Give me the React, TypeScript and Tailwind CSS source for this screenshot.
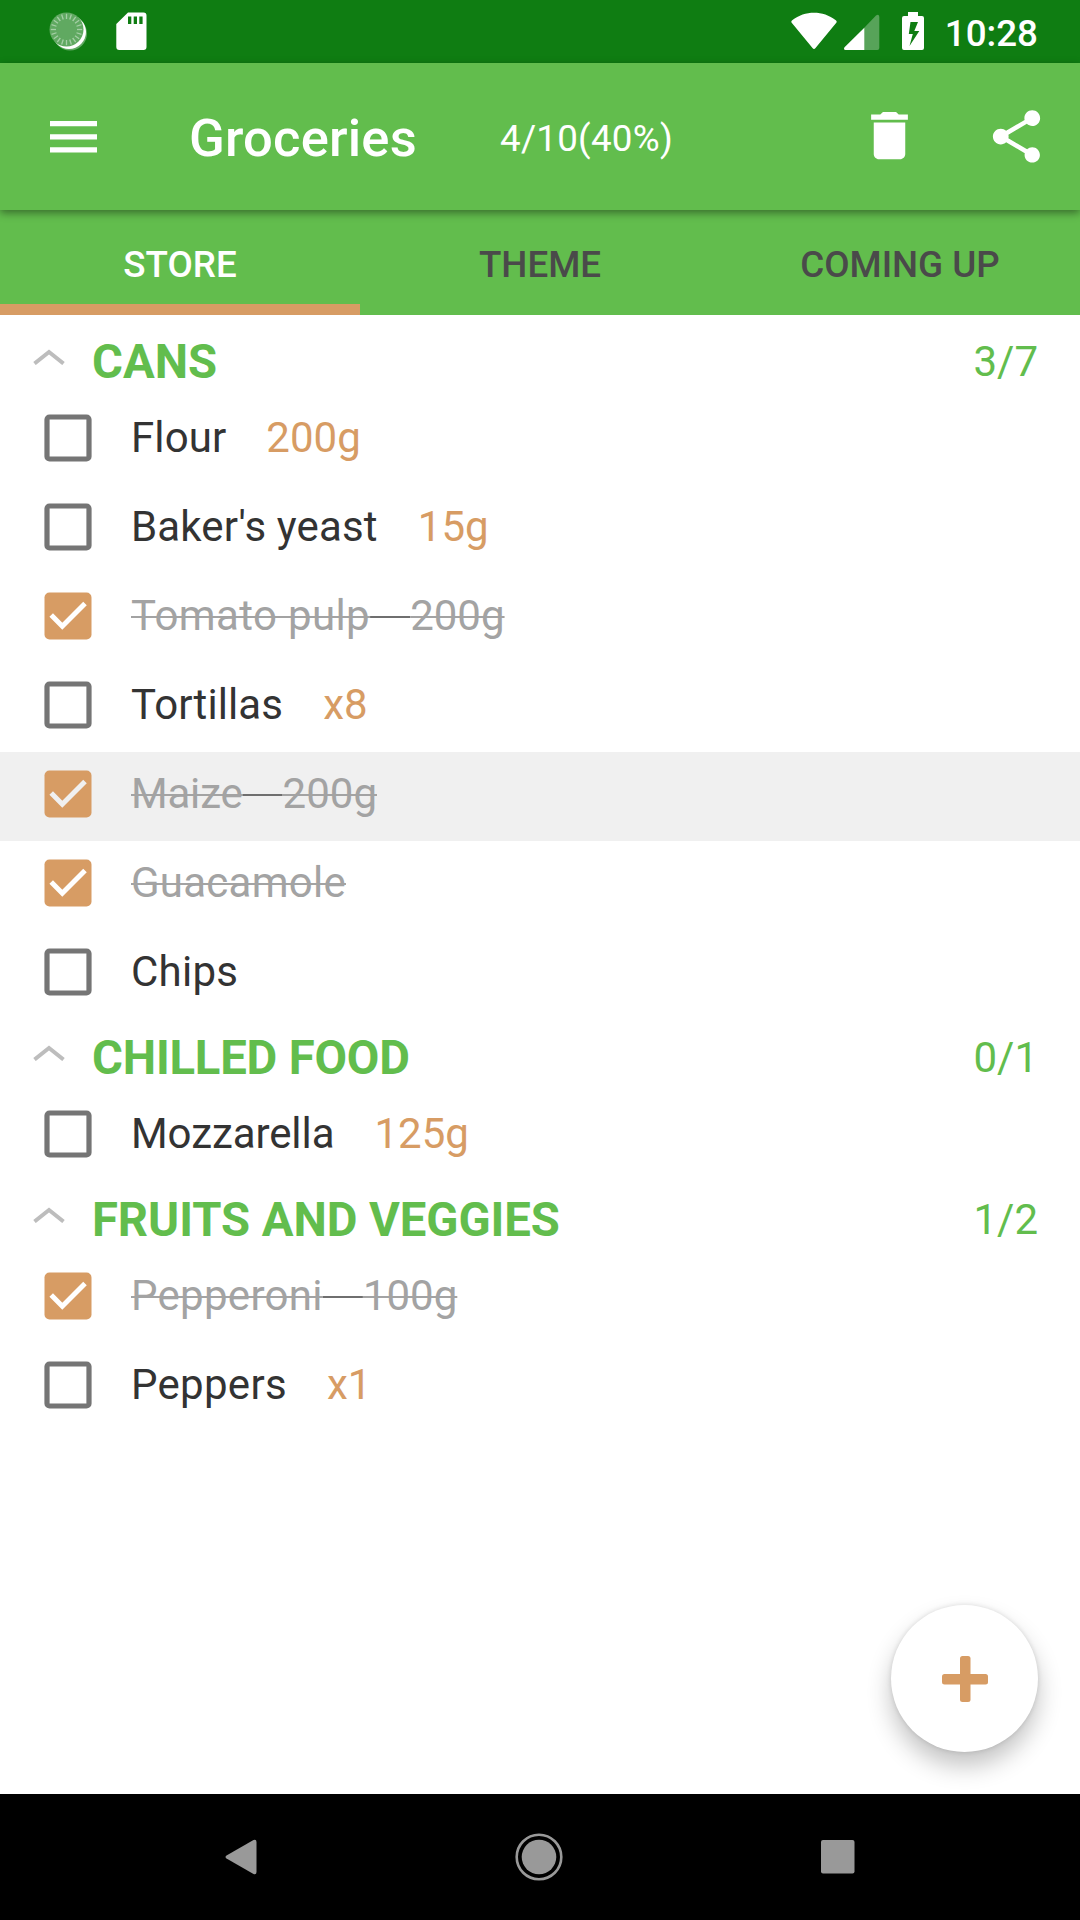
import React from "react";

type Item = { name: string; qty?: string; done?: boolean; active?: boolean; tracking: string };
type Section = { title: string; count: string; tracking: string; items: Item[] };

const sections: Section[] = [
  {
    title: "CANS",
    count: "3/7",
    tracking: "tracking-normal",
    items: [
      { name: "Flour", qty: "200g", tracking: "tracking-[0.1px]" },
      { name: "Baker's yeast", qty: "15g", tracking: "tracking-[0.16px]" },
      { name: "Tomato pulp", qty: "200g", done: true, tracking: "tracking-[0.38px]" },
      { name: "Tortillas", qty: "x8", tracking: "tracking-[0.1px]" },
      { name: "Maize", qty: "200g", done: true, active: true, tracking: "tracking-[-0.2px]" },
      { name: "Guacamole", done: true, tracking: "tracking-[0.25px]" },
      { name: "Chips", tracking: "tracking-[0.25px]" },
    ],
  },
  {
    title: "CHILLED FOOD",
    count: "0/1",
    tracking: "tracking-[-0.2px]",
    items: [{ name: "Mozzarella", qty: "125g", tracking: "tracking-[-0.08px]" }],
  },
  {
    title: "FRUITS AND VEGGIES",
    count: "1/2",
    tracking: "tracking-[-0.07px]",
    items: [
      { name: "Pepperoni", qty: "100g", done: true, tracking: "tracking-[0.3px]" },
      { name: "Peppers", qty: "x1", tracking: "tracking-[0.3px]" },
    ],
  },
];

const ticks = Array.from({ length: 20 }, (_, i) => i * 18);

function StatusBar() {
  return (
    <div className="flex h-[63px] shrink-0 items-start bg-[#0f7d12] text-white">
      <svg className="ml-[48px] mt-[10px] h-[42px] w-[42px]" viewBox="0 0 42 42">
        <circle cx="22" cy="23.5" r="17" fill="#fff" opacity="0.35" />
        <circle cx="21" cy="22" r="17" fill="#fff" />
        <circle cx="18.5" cy="19.5" r="17" fill="#60a961" />
        {ticks.map((a) => (
          <line key={a} x1="18.5" y1="3.8" x2="18.5" y2="9" stroke="#a5cfa6" strokeWidth="1.3" transform={`rotate(${a} 18.5 19.5)`} />
        ))}
      </svg>
      <svg className="ml-[26px] mt-[12px] h-[39px] w-[31px]" viewBox="0 0 31 39">
        <path d="M12 0.5H27.5a3 3 0 0 1 3 3V35a3 3 0 0 1-3 3H3.3a3 3 0 0 1-3-3V12Z" fill="#fff" />
        <path d="M12 4.5h3.3v7.5H12zM17.7 4.5H21v7.5h-3.300zM23.300 4.500h3.300v7.500h-3.300z" fill="#0f7d12" />
      </svg>
      <div className="flex-1" />
      <svg className="mt-[12px] h-[38px] w-[46px]" viewBox="0 0 46 38">
        <path d="M0.700 10.700Q-0.300 9.300 1.200 8.200C14-1.700 32-1.700 44.800 8.200Q46.300 9.300 45.300 10.700L24.500 36Q23 37.800 21.500 36Z" fill="#fff" />
      </svg>
      <svg className="ml-[7px] mt-[14px] h-[37px] w-[36px]" viewBox="0 0 36 37">
        <path d="M20 14L32 1.500Q33 .7 34 .7Q35.300 1 35.300 3V34Q35.300 36 33.300 36H20Z" fill="#57a359" />
        <path d="M20.300 13.700V36H1.500Q0 36 0 34.500Q0 33.700 .8 33Z" fill="#fff" />
      </svg>
      <svg className="ml-[22px] mt-[12px] h-[38px] w-[22px]" viewBox="0 0 22 38">
        <path fillRule="evenodd" d="M6 0H16V4H20Q22 4 22 6V36Q22 38 20 38H2Q0 38 0 36V6Q0 4 2 4H6ZM8.500 10L6.800 22H10.800L7.500 34L17.300 19H12.300L16 10Z" fill="#fff" />
      </svg>
      <span className="ml-[21px] mr-[42px] mt-[12px] text-[36.750px] font-medium leading-[43px]">10:28</span>
    </div>
  );
}

function AppBar() {
  return (
    <header className="relative z-10 flex h-[147px] shrink-0 items-center bg-[#62bd4d] text-white shadow-[0_3px_8px_rgba(0,0,0,0.42)]">
      <svg className="ml-[50px] h-[32px] w-[47px]" viewBox="0 0 47 32">
        <path d="M0 0h47v5.300H0zM0 13.300h47v5.300H0zM0 26.300h47v5.300H0z" fill="#fff" />
      </svg>
      <h1 className="ml-[92px] w-[229px] whitespace-nowrap pt-[3px] text-[52.500px] font-medium leading-[62px] tracking-[0.200px]">Groceries</h1>
      <span className="ml-[82px] pt-[4px] text-[36.750px] leading-[43px] tracking-[0.250px]">4/10(40%)</span>
      <div className="flex-1" />
      <svg className="mb-[2px] mr-[64px] h-[63px] w-[63px]" viewBox="0 0 24 24" fill="#fff">
        <path d="M6 19c0 1.100.9 2 2 2h8c1.100 0 2-.9 2-2V7H6v12zM19 4h-3.500l-1-1h-5l-1 1H5v2h14V4z" />
      </svg>
      <svg className="mb-[1px] mr-[32px] h-[63px] w-[63px]" viewBox="0 0 24 24" fill="#fff">
        <path d="M18 16.080c-.76 0-1.440.3-1.960.77L8.910 12.700c.05-.23.09-.46.09-.7s-.04-.47-.09-.7l7.050-4.110c.54.5 1.250.81 2.040.81 1.660 0 3-1.340 3-3s-1.340-3-3-3-3 1.340-3 3c0 .24.040.47.090.7L8.040 9.810C7.500 9.310 6.790 9 6 9c-1.660 0-3 1.340-3 3s1.340 3 3 3c.79 0 1.500-.31 2.040-.81l7.120 4.160c-.05.21-.08.43-.08.65 0 1.610 1.310 2.920 2.920 2.920 1.610 0 2.920-1.310 2.920-2.920s-1.310-2.920-2.920-2.920z" />
      </svg>
    </header>
  );
}

function Tabs() {
  return (
    <nav className="grid h-[105px] shrink-0 grid-cols-3 bg-[#62bd4d] text-center text-[36.750px] font-medium leading-[43px] text-[#4a4a4a]">
      <span className="border-b-[11px] border-[#d79c64] pt-[33px] text-white">STORE</span>
      <span className="pt-[33px]">THEME</span>
      <span className="pt-[33px]">COMING UP</span>
    </nav>
  );
}

function Checkbox({ done }: { done?: boolean }) {
  return (
    <svg className="h-[48px] w-[48px]" viewBox="0 0 48 48">
      {done ? (
        <>
          <rect x="0.500" y="0.500" width="47" height="47" rx="5" fill="#d79c64" />
          <path d="M7.200 23L18.300 34.300L41 11.500" fill="none" stroke="currentColor" strokeWidth="5" />
        </>
      ) : (
        <rect x="3" y="3" width="42" height="42" rx="2.500" fill="none" stroke="#757575" strokeWidth="5.200" />
      )}
    </svg>
  );
}

function Label({ item }: { item: Item }) {
  const strike = item.done ? "line-through decoration-2 " : "";
  return (
    <span className="ml-[39px] whitespace-pre pb-[2px] text-[42px] leading-[49px]">
      <span className={strike + item.tracking + (item.done ? " text-[#a3a3a3]" : " text-[#333]")}>{item.name}</span>
      {item.qty && <span className={strike + "tracking-[-0.400px] text-[#6f6f6f]"}>{"    "}</span>}
      {item.qty && <span className={strike + (item.done ? "text-[#a3a3a3]" : "text-[#d79c64]")}>{item.qty}</span>}
    </span>
  );
}

function Row({ item }: { item: Item }) {
  return (
    <li className={item.active ? "flex h-[89px] items-center bg-[#f0f0f0] pb-[5px] pl-[44px] text-[#f0f0f0]" : "flex h-[89px] items-center pb-[5px] pl-[44px] text-white"}>
      <Checkbox done={item.done} />
      <Label item={item} />
    </li>
  );
}

export default function App() {
  return (
    <div className="flex h-[1920px] w-[1080px] flex-col overflow-hidden bg-white font-[Roboto,sans-serif]">
      <StatusBar />
      <AppBar />
      <Tabs />
      <main className="relative flex-1 pt-[8px]">
        {sections.map((s) => (
          <section key={s.title}>
            <div className="flex h-[73px] items-center pl-[33px] pr-[42px] text-[#62bd4d]">
              <svg className="mb-[5px] h-[16px] w-[32px]" viewBox="0 0 32 16">
                <path d="M1.500 14.500L16 3L30.500 14.500" fill="none" stroke="#bdbdbd" strokeWidth="4" />
              </svg>
              <h2 className={"ml-[27px] pt-[6px] text-[47.250px] font-bold leading-[55px] " + s.tracking}>{s.title}</h2>
              <span className="ml-auto pt-[4px] text-[42px] leading-[49px]">{s.count}</span>
            </div>
            <ul>
              {s.items.map((i) => (
                <Row key={i.name} item={i} />
              ))}
            </ul>
          </section>
        ))}
        <button className="absolute bottom-[42px] right-[42px] flex h-[147px] w-[147px] items-center justify-center rounded-full bg-white shadow-[0_14px_24px_rgba(0,0,0,0.24),0_0_5px_rgba(0,0,0,0.13)]">
          <svg className="h-[46px] w-[46px]" viewBox="0 0 46 46" fill="#d79c64">
            <rect x="18" y="0" width="10.500" height="46" rx="2.500" />
            <rect x="0" y="18" width="46" height="10.500" rx="2.500" />
          </svg>
        </button>
      </main>
      <footer className="flex h-[126px] shrink-0 items-center bg-black">
        <svg className="ml-[225px] h-[36px] w-[32px]" viewBox="0 0 32 36">
          <path d="M28.500 1Q31.500 0 31.500 3V33Q31.500 36 28.500 35L1.500 19.500Q-.5 18 1.500 16.500Z" fill="#999" />
        </svg>
        <svg className="mb-[1px] ml-[258px] h-[48px] w-[48px]" viewBox="0 0 48 48">
          <circle cx="24" cy="24" r="22.300" fill="none" stroke="#999" strokeWidth="2.600" />
          <circle cx="24" cy="24" r="17.300" fill="#999" />
        </svg>
        <svg className="ml-[258px] h-[34px] w-[34px]" viewBox="0 0 34 34">
          <rect width="33.500" height="33.500" rx="2" fill="#999" />
        </svg>
      </footer>
    </div>
  );
}
